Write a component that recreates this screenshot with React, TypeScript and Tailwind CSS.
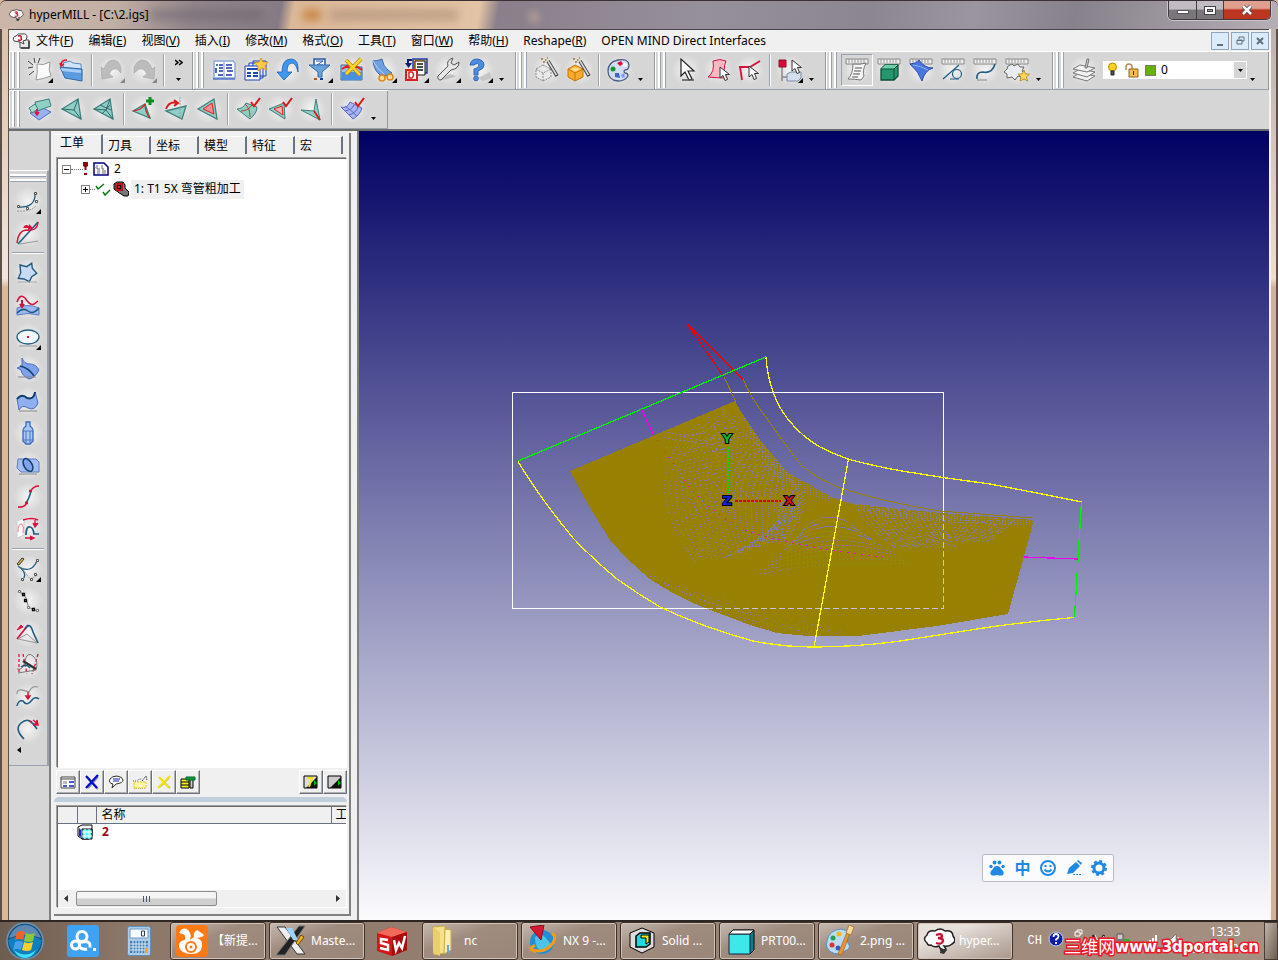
import React from 'react';

type Art = Record<string, React.ReactNode>;

const NAVY = '#1f5a80';
const RED = '#d8113c';

/** Shared piece: cursor arrow used by the selection tools. */
const cursor = (x: number, y: number) => (
  <path
    transform={`translate(${x} ${y})`}
    d="M0 0v11l3-2.500 2 5 2.500-1-2-5h4z"
    fill="#fff"
    stroke="#333"
    strokeWidth="1"
  />
);

const wand = (
  <>
    <path d="M13 3l9 15" stroke="#444" strokeWidth="3.500" />
    <path d="M13 3l8.500 14" stroke="#ddd" strokeWidth="1.500" />
    <path d="M6 1h2M10 2h1.500M8 4h2M12 0h1" stroke="#a0702c" strokeWidth="1.500" />
  </>
);

const ruler = (
  <>
    <path d="M1 1h22v5H1z" fill="#eee" stroke="#888" />
    <path d="M4 1v4M7 1v4M10 1v4M13 1v4M16 1v4M19 1v4" stroke="#999" />
  </>
);

const check = <path d="M15 5l3 4 6-8" fill="none" stroke="#e01818" strokeWidth="2" />;

const cube = (fill: string, line: string, dash?: string) => (
  <g fill={fill} stroke={line} strokeDasharray={dash}>
    <path d="M8 7l8 4v8l-8 4-7-4v-8z" />
    <path d="M1 11l7 4 8-4M8 15v8" fill="none" />
  </g>
);

const tri = (
  <path d="M2 12L18 2l3 20z" fill="#8fcfc6" stroke="#3f7f7c" strokeWidth="1.300" />
);

const TOOL_ART: Art = {
  new: (
    <>
      <path d="M9 6q6 2 13-2-2 8 1 14-8 3-15 4 2-8 1-16z" fill="#fafafa" stroke="#999" />
      <path d="M0 3l5 4M6 0l1 5M12 0l-2 5M0 10l5-1M1 17l5-4" stroke="#444" strokeWidth="1" />
    </>
  ),
  open: (
    <>
      <path d="M3 5l7-2 3 2 8 1 1 12H4z" fill="#cfe3fa" stroke="#5c86b8" />
      <path d="M0 9l22 2v12L5 20z" fill="#5b9be0" stroke="#3268a5" />
      <path d="M1 10l20 2v3L2 13z" fill="#a9cdf5" />
      <path d="M1 7q0-5 6-5M0 5l1 3 3-2" fill="none" stroke="#e01030" strokeWidth="1.500" />
    </>
  ),
  undo: (
    <path d="M1 9l1 12 11-2-4-3q3-6 8-5l4 4q1-11-7-13-7 0-10 9z" fill="#bcbcbc" stroke="#a2a2a2" strokeWidth=".6" />
  ),
  redo: (
    <path d="M23 9l-1 12-11-2 4-3q-3-6-8-5l-5 4Q1 4 10 2q7 0 10 9z" fill="#bcbcbc" stroke="#a2a2a2" strokeWidth=".6" />
  ),
  split: (
    <>
      <path d="M2 3h19l2 2v15H2z" fill="#fff" stroke="#8ba9dc" strokeWidth="1.500" />
      <path d="M12 4v16" stroke="#7d9ed8" />
      <path d="M4 7h2m1 0h4M7 10h4M7 13h4M6 17h5M14 7h6M14 10h6M15 13h6M14 17h6M4 10v5" stroke="#1636ac" strokeWidth="1.500" />
      <path d="M1 21h22" stroke="#1d46c0" />
    </>
  ),
  joblist: (
    <>
      <path d="M9 3h13v15H9zM5 5h14v15H5z" fill="#dfe9ff" stroke="#1d3fae" />
      <path d="M1 8h15v14H1z" fill="#fff" stroke="#1d3fae" />
      <path d="M3 11h11M3 15h4M3 18h4M9 15h5M9 18h5" stroke="#1d46c0" strokeWidth="2" />
      <path d="M17 0l2 4 5 0-3 4 2 4-5-2-4 3 0-5-4-3 5-1z" fill="#ffc94a" stroke="#c98a10" strokeWidth=".7" />
    </>
  ),
  back: (
    <path d="M8 22l-7-8h5q0-13 9-13 8 0 7 13-2-9-6-9-5 0-5 9h5z" fill="#3f97ee" stroke="#1e5fb5" strokeWidth=".8" />
  ),
  filter: (
    <>
      <path d="M6 1h11v8H6z" fill="#fff" stroke="#2758a8" strokeWidth="1.500" />
      <path d="M8 3l7 0-6 4h6" fill="none" stroke="#2758a8" />
      <path d="M1 7h21l-8 7v5h-4v-5z" fill="#6aa3dc" stroke="#3468a6" />
      <path d="M6 21h3" stroke="#b05a10" strokeWidth="2" />
      <path d="M12 21h3" stroke="#1636ac" strokeWidth="2" />
    </>
  ),
  folderx: (
    <>
      <path d="M1 7h8l2 2h11v13H1z" fill="#9cc1ec" stroke="#3468a6" />
      <path d="M2 11l5-3 4 3 5-3 6 4" fill="none" stroke="#e02020" strokeWidth="2" />
      <path d="M2 14h20v8H2z" fill="#4a90de" />
      <path d="M6 2l14 15M21 1L6 16" stroke="#b58a00" strokeWidth="4" />
      <path d="M6 2l14 15M21 1L6 16" stroke="#ffd62e" strokeWidth="2.500" />
    </>
  ),
  simulate: (
    <>
      <path d="M1 3q4 0 9-2 1 7 6 11l4 3-9 4Q2 14 1 3z" fill="#6ea0e0" stroke="#3e6cb0" />
      <path d="M1 3q4 8 11 13" fill="none" stroke="#b9d4f5" />
      <g fill="#f9dca0" stroke="#d88a1a" strokeWidth="1.500">
        <circle cx="10" cy="20" r="3" />
        <circle cx="18" cy="19" r="3" />
      </g>
    </>
  ),
  docD: (
    <>
      <path d="M9 1h14v14H9z" fill="#ffae3c" stroke="#1d3fae" strokeWidth="1.500" />
      <path d="M11 3h10v14H11z" fill="#fff" stroke="#111" />
      <path d="M13 6h6M13 9h6M13 12h6" stroke="#111" strokeWidth="1.500" />
      <path d="M2 12h11v10H2z" fill="#fff" stroke="#d82020" strokeWidth="2" />
      <path d="M5 14h3q3 3 0 6H5z" fill="none" stroke="#d82020" strokeWidth="1.500" />
      <path d="M8 2H4v5" fill="none" stroke="#111b70" strokeWidth="2" />
      <path d="M1 5h7l-3.500 5z" fill="#111b70" />
    </>
  ),
  wrench: (
    <>
      <path d="M2 22q10 0 18-4l-6-2z" fill="#999" opacity=".5" />
      <path d="M2 18l10-10q-2-6 5-8l-2 5 3 2 5-3q0 7-8 8L5 22q-4 0-3-4z" fill="#e6e6e6" stroke="#555" />
    </>
  ),
  help: (
    <>
      <path d="M10 20l12-6 1 6-8 3z" fill="#aaa" opacity=".5" />
      <path d="M2 7q1-6 7-6 7 1 7 6 0 4-6 6v4H6v-6q5-1 5-4-1-3-5 0z" fill="#4d8de0" stroke="#2c66b8" />
      <circle cx="8" cy="20.500" r="2.300" fill="#4d8de0" stroke="#2c66b8" />
    </>
  ),
  cubeGrey: (
    <>
      {cube('#e9e9e9', '#888', '2 1')}
      {wand}
    </>
  ),
  cubeGold: (
    <>
      {cube('#f9a92c', '#c37708')}
      <path d="M3 11l5-2 6 2-6 3z" fill="#ffd780" />
      {wand}
    </>
  ),
  palette: (
    <>
      <path d="M11 2q10-2 11 5 0 5-4 5-2 1 0 3 3 0 3 3-3 5-10 5Q1 22 1 13 1 4 11 2z" fill="#d4dded" stroke="#4a5d86" strokeWidth="1.300" />
      <path d="M10 5l4-2 2 3-3 2z" fill="#d8113c" />
      <circle cx="6" cy="11" r="2.500" fill="#18932d" />
      <path d="M8 15l4 0 1 5-5-1z" fill="#3d64cf" />
      <circle cx="18" cy="7" r="2" fill="#fff" />
      <path d="M14 17l3-2 1 4-3 1z" fill="#7e9be8" />
    </>
  ),
  select: (
    <>
      <path d="M7 1v17l4-4 4 8 3-1-4-8h6z" fill="#fff" stroke="#222" strokeWidth="1.200" />
      <path d="M8 22h12" stroke="#555" strokeWidth="1.500" />
    </>
  ),
  selFace: (
    <>
      <path d="M7 3q7-3 13 0-4 9 1 17-9 0-19-1 7-5 5-16z" fill="#ffb9c4" stroke={RED} />
      {cursor(14, 9)}
    </>
  ),
  selCurve: (
    <>
      <path d="M1 9l11 0 10-6M2 9l2 13" fill="none" stroke={RED} strokeWidth="1.800" />
      {cursor(11, 8)}
    </>
  ),
  selTree: (
    <>
      <path d="M4 9v14M4 19h8" stroke="#888" strokeWidth="1.500" />
      <path d="M1 2h7v7H1z" fill="#d80c3b" stroke="#8d0f2b" />
      <path d="M9 16l4-2h10v6l-3 3H9z" fill="#d5deec" stroke="#7d8aa0" />
      {cursor(14, 2)}
    </>
  ),
  script: (
    <>
      {ruler}
      <path d="M8 6q7 1 13-1-4 8-2 13l-3 4q-7-1-13-1 5-5 5-15z" fill="#f6f6f6" stroke="#777" />
      <path d="M10 10h7M9 13h7M8 16h7M7 19h6" stroke="#555" />
    </>
  ),
  solid: (
    <>
      {ruler}
      <path d="M4 11l4-4h13v11l-4 4H4z" fill="#27966f" stroke="#0b4e38" strokeWidth="1.300" />
      <path d="M4 11l4-4h13l-4 4z" fill="#6cd0a8" />
      <path d="M4 11h13v11M17 11l4-4" fill="none" stroke="#0b4e38" />
    </>
  ),
  surface: (
    <>
      {ruler}
      <path d="M1 6q6 0 9-4 5 8 14 8-8 2-11 13Q10 14 1 6z" fill="#4a74e0" stroke="#2a4cae" />
      <path d="M4 7q8 1 15 5" fill="none" stroke="#8fb0ff" />
    </>
  ),
  lineCircle: (
    <>
      {ruler}
      <path d="M2 21L18 7M9 21h9" stroke={NAVY} strokeWidth="1.200" />
      <circle cx="16" cy="16" r="4.500" fill="none" stroke={NAVY} strokeWidth="1.200" />
    </>
  ),
  curve: (
    <>
      {ruler}
      <path d="M4 21q-1-7 6-7 9 2 12-8" fill="none" stroke={NAVY} strokeWidth="1.600" />
      <path d="M4 22h10" stroke="#888" />
    </>
  ),
  puzzle: (
    <>
      {ruler}
      <path d="M3 8l4-2 2 2 4-2 2 3 4 0-2 4 3 3-4 3-3-1-3 4-3-3-5 1 0-4-3-2 3-3z" fill="#e9edf2" stroke="#666" />
      <path d="M19 12l1.500 4 4 0-3 3 1 4-3.500-2-4 2 1-4-3-3 4 0z" fill="#ffd75a" stroke="#b08010" strokeWidth=".8" />
    </>
  ),
  layers: (
    <g fill="#f2f2f2" stroke="#777">
      <path d="M1 19l7-4 15 3-8 5z" />
      <path d="M1 15l7-4 15 3-8 5z" />
      <path d="M1 11l7-4 15 3-8 4z" />
      <path d="M13 10l2-9 2 0-2 9z" fill="#ccc" />
    </g>
  ),
  planes: (
    <>
      <path d="M2 16l13-5 8 4-12 8z" fill="#9bb2ef" stroke="#4e6cc0" />
      <path d="M7 5l14-3 2 7-14 5z" fill="#8fcfc6" stroke="#3f7f7c" />
      <path d="M1 11l6-4 3 5-6 4z" fill="#a6d8d0" stroke="#3f7f7c" />
      <path d="M9 12v5M7 15l2 3 2-3" stroke={RED} strokeWidth="1.500" fill="none" />
    </>
  ),
  triA: (
    <>
      {tri}
      <path d="M2 12l12 1 4-11M14 13l7 9" fill="none" stroke="#2f6a68" />
    </>
  ),
  triB: (
    <>
      {tri}
      <path d="M2 12l12 1 4-11M14 13l7 9M8 8l11 5M10 17l8-9" fill="none" stroke="#2f6a68" />
    </>
  ),
  triPlus: (
    <>
      <path d="M1 14l12-7 5 14z" fill="#8fcfc6" stroke="#3f7f7c" strokeWidth="1.300" />
      <path d="M1 14q9-1 12-7 0 8 5 14" fill="none" stroke="#d82020" strokeWidth="1.200" />
      <path d="M18 0v8M14 4h8" stroke="#0a8f1f" strokeWidth="3" />
    </>
  ),
  triRotate: (
    <>
      <path d="M2 14l20-5-4 13z" fill="#8fcfc6" stroke="#3f7f7c" strokeWidth="1.300" />
      <path d="M16 0v22" stroke="#999" strokeDasharray="2 1" />
      <path d="M2 12q3-8 11-6M10 3l4 3-4 3" fill="none" stroke="#e01818" strokeWidth="2" />
    </>
  ),
  triRed: (
    <>
      {tri}
      <path d="M7 12l9-6 2 11z" fill="#f08b93" stroke="#d82020" />
    </>
  ),
  surfCheck: (
    <>
      <path d="M1 12q6 0 9-6l11 4q0 6-7 12z" fill="#8fcfc6" stroke="#3f7f7c" />
      <path d="M5 14q7 0 11-6M9 7q5 4 5 13" fill="none" stroke="#b04030" />
      {check}
    </>
  ),
  triCheck: (
    <>
      <path d="M1 12l15-6 1 16z" fill="#8fcfc6" stroke="#3f7f7c" />
      <path d="M6 12l8-3 1 9z" fill="#f3b4b8" stroke="#d82020" />
      {check}
    </>
  ),
  triEdge: (
    <>
      <path d="M1 13l13 1 2-12 4 21z" fill="#8fcfc6" stroke="#3f7f7c" />
      <path d="M14 14l6 9" stroke="#d82020" strokeWidth="1.800" />
    </>
  ),
  meshCheck: (
    <>
      <path d="M1 10q6 2 9-5l12 6q-2 7-9 11z" fill="#a9b4f0" stroke="#5968c0" />
      <path d="M5 14q7-1 9-6M9 18q7-2 9-8M5 9q7 5 12 10" fill="none" stroke="#5968c0" />
      {check}
    </>
  ),
};

const SIDE_ART: Art = {
  arcPts: (
    <>
      <path d="M2 18q18 1 17-14" fill="none" stroke={NAVY} strokeWidth="1.200" />
      <path d="M1 22q14 1 19-5" fill="none" stroke="#999" strokeDasharray="2 1" />
      <path d="M1.500 16.500h2v2h-2zM10.500 18.500h2v2h-2zM19.500 11.500h2v2h-2zM18.500 3.500h2v2h-2z" fill="#fff" stroke="#555" />
    </>
  ),
  tangent: (
    <>
      <path d="M2 23L22 1" stroke={NAVY} strokeWidth="1.500" />
      <path d="M1 22Q2 10 10 9q11 2 12-8" fill="none" stroke={RED} strokeWidth="1.500" />
      <path d="M7 7q2-5 6-2l0-2 4 4-5 2 0-2z" fill={RED} />
      <path d="M4 23l18-3" stroke="#999" />
    </>
  ),
  star: (
    <>
      <path
        d="M4 4L10.700 5.700L15.700 2.300L16.300 7.300L20.700 12.300L15.700 15.700L13.300 20.700L8 18L2.300 17.300L4.700 11.700Z"
        fill="#c9daf5"
        stroke={NAVY}
        strokeWidth="1.400"
      />
      <path d="M2 21h19" stroke="#aaa" />
    </>
  ),
  project: (
    <>
      <path d="M1 15q11-5 22 0v7q-11-3-22 0z" fill="#9bb8ef" stroke="#5a7cc8" />
      <path d="M1 20q6-6 11-2t11-3" fill="none" stroke={NAVY} strokeWidth="1.500" />
      <path d="M1 9q3-9 8-4 5 8 9 6l4-3" fill="none" stroke={RED} strokeWidth="1.500" />
      <path d="M6 7v6M4 11l2 3 2-3" stroke={RED} strokeWidth="2" />
    </>
  ),
  ellipse: (
    <>
      <ellipse cx="12" cy="12" rx="11" ry="7" fill="#f4f8fb" stroke={NAVY} strokeWidth="1.300" />
      <path d="M11 11h2v2h-2z" fill={RED} />
      <path d="M3 21h18" stroke="#999" />
    </>
  ),
  fill: (
    <>
      <path d="M6 1q2 6 8 6 6 0 9 6-4 8-10 9-7-3-8-9L1 11l5-2z" fill="#7fa2ea" stroke="#4a6cc4" />
      <path d="M4 9q9 2 14 10" fill="none" stroke="#123e6a" strokeWidth="1.500" />
      <path d="M2 20h18" stroke="#888" />
    </>
  ),
  sweep: (
    <>
      <path d="M1 10q5-6 10-1 7 2 8-6l3 11q-3 8-10 5-6-4-9 2z" fill="#8fb0ef" stroke="#4a6cc4" />
      <path d="M1 10q5-6 10-1 7 2 8-6" fill="none" stroke="#123e6a" strokeWidth="2" />
      <path d="M3 22h18" stroke="#888" />
    </>
  ),
  bottle: (
    <>
      <path d="M10 1h4v4q3 2 3 5v10l-3 3h-4l-3-3V10q0-3 3-5z" fill="#a9c6f5" stroke="#3b68b8" strokeWidth="1.300" />
      <path d="M7 10h10M7 19h10M10 10v12M14 10v12" stroke="#3b68b8" strokeWidth=".8" />
    </>
  ),
  band: (
    <>
      <path d="M2 6h18l3 3v10H5l-4-4z" fill="#a5bdf0" stroke="#5a7cc8" />
      <ellipse cx="12" cy="12" rx="4" ry="7" transform="rotate(-30 12 12)" fill="#7fa2ea" stroke="#123e6a" strokeWidth="1.500" />
      <path d="M3 21h18" stroke="#888" />
    </>
  ),
  blend: (
    <>
      <path d="M2 22q7 1 9-5M15 6q2-5 8-5" fill="none" stroke={RED} strokeWidth="1.600" />
      <path d="M10 18q3-4 5-12" fill="none" stroke={NAVY} strokeWidth="1.500" />
      <path d="M9 18h3M13 6h3" stroke={RED} strokeWidth="2.500" />
    </>
  ),
  wrap: (
    <>
      <path d="M1 4l7-3v17l-7 3z" fill="#fff" stroke="#ccc" />
      <path d="M2 15q0-8 3-8t2 9" fill="none" stroke="#f07a92" />
      <path d="M7 3q9-3 15 0" fill="none" stroke={RED} strokeWidth="1.500" />
      <path d="M10 18q0-9 4-8 3 0 4 7l5 0" fill="none" stroke={NAVY} strokeWidth="1.700" />
      <path d="M19 3v5M17 6l2 4 3-4M9 21h8M14 19l4 2-4 2" stroke={RED} strokeWidth="1.300" fill={RED} />
    </>
  ),
  sketch: (
    <>
      <path d="M2 9q9 6 6 12M3 10q12 7 18-6" fill="none" stroke={NAVY} strokeWidth="1.300" />
      <path d="M5 10l9 12 8-4" fill="none" stroke="#999" strokeDasharray="2 1" />
      <path d="M1 7l5-6 2 1-5 6z" fill="#e2b53a" stroke="#333" />
      <path d="M20.500 2.500h2v2h-2zM18.500 16.500h2v2h-2zM5.500 21.500h2v2h-2zM14.500 21.500h2v2h-2z" fill="#fff" stroke="#555" />
    </>
  ),
  points: (
    <>
      <path d="M3 3q7 2 8 10t12 9" fill="none" stroke="#777" />
      <path d="M2.500 1.500h2v2h-2zM20.500 20.500h2v2h-2zM11.500 17.500h2v2h-2z" fill="#fff" stroke="#777" />
      <path d="M6.500 4.500h2v2h-2zM8.500 10.500h2v2h-2zM16.500 19.500h2v2h-2z" fill="#fff" stroke="#000" strokeWidth="1.300" />
    </>
  ),
  extend: (
    <>
      <path d="M1 18L12 4" stroke={RED} strokeWidth="1.700" />
      <path d="M9 8q5-8 8 3l5 11" fill="none" stroke={NAVY} strokeWidth="1.600" />
      <path d="M2 18l9-5 10 9z" fill="none" stroke="#999" />
      <path d="M1 9l4-5 2 2z" fill={RED} stroke={RED} />
    </>
  ),
  trim: (
    <>
      <path d="M3 1v20M7 1l4 20M22 1q-3 12-6 20" stroke={RED} strokeWidth="1.300" strokeDasharray="3 2" fill="none" />
      <path d="M1 16q6 2 8-8t8-5 3 14l-18 3" fill="none" stroke="#777" />
      <path d="M7 8l13 8" stroke="#333" strokeWidth="2.500" />
      <path d="M5 14q5-4 9 1" fill="none" stroke={NAVY} strokeWidth="1.500" />
    </>
  ),
  offset: (
    <>
      <path d="M1 9q0-5 5-4t7 2q3-7 9-5" fill="none" stroke="#999" strokeWidth="1.300" />
      <path d="M1 21q1-6 6-5 4 6 9-1 3-4 7-1" fill="none" stroke={NAVY} strokeWidth="1.500" />
      <path d="M12 7v5M10 11l2 3 2-3z" fill={RED} stroke={RED} strokeWidth="1.500" />
    </>
  ),
  arc: (
    <>
      <path d="M8 22Q-2 12 5 6q6-5 10-1 3 2 6 7" fill="none" stroke={NAVY} strokeWidth="1.600" />
      <path d="M13 4l3 1M17 3l5 4M21 3l1 5-5 0" stroke={RED} strokeWidth="1.500" fill={RED} />
    </>
  ),
};

interface ToolProps {
  art: React.ReactNode;
  label: string;
  corner?: 'black' | 'grey';
  pressed?: boolean;
}

/** 32px icon button with the soft highlight that lies behind every tool. */
function Tool({ art, label, corner, pressed }: ToolProps) {
  return (
    <button
      aria-label={label}
      className={`relative flex size-8 shrink-0 items-center justify-center ${
        pressed ? 'border border-t-gray-400 border-l-gray-400 border-r-white border-b-white' : ''
      } bg-[radial-gradient(circle,#f4f4f4_0%,#d6d6d6_65%)]`}
    >
      <svg viewBox="0 0 24 24" className="size-6 overflow-visible" fill="none">
        {art}
        {corner && <path d="M25 20v5h-5z" fill={corner === 'black' ? '#000' : '#888'} />}
      </svg>
    </button>
  );
}

function Grip() {
  return (
    <div className="ml-[3px] mr-1 flex h-9 w-2 shrink-0 gap-[2px]">
      <div className="w-[3px] border-l-2 border-r border-white border-r-gray-400" />
      <div className="w-[3px] border-l-2 border-r border-white border-r-gray-400" />
    </div>
  );
}

const Sep = () => (
  <div className="flex w-2 shrink-0 justify-center">
    <div className="h-8 w-[2px] border-l border-r border-l-gray-400 border-r-white" />
  </div>
);

function More({ chevron }: { chevron?: boolean }) {
  return (
    <button
      aria-label="More"
      className={`flex h-9 shrink-0 flex-col justify-end gap-3 pb-[7px] ${
        chevron ? 'w-[25px] items-center pr-1' : 'w-5 items-start pl-[3px]'
      }`}
    >
      {chevron && (
        <svg viewBox="0 0 8 7" className="h-[7px] w-2">
          <path d="M0 1l3 2.500L0 6M4 1l3 2.500L4 6" fill="none" stroke="#000" strokeWidth="1.500" />
        </svg>
      )}
      <svg viewBox="0 0 5 3" className="h-[3px] w-[5px]">
        <path d="M0 0h5L2.500 3z" />
      </svg>
    </button>
  );
}

function Toolbar({ children, grow }: { children: React.ReactNode; grow?: boolean }) {
  return (
    <div
      className={`flex h-[39px] items-center border-b border-gray-400 shadow-[inset_1px_1px_0_#fff,inset_-1px_0_0_#999] ${
        grow ? 'flex-1' : 'shrink-0'
      }`}
    >
      <Grip />
      {children}
    </div>
  );
}

const MENUS: [string, string][] = [
  ['文件', 'F'],
  ['编辑', 'E'],
  ['视图', 'V'],
  ['插入', 'I'],
  ['修改', 'M'],
  ['格式', 'O'],
  ['工具', 'T'],
  ['窗口', 'W'],
  ['帮助', 'H'],
  ['Reshape', 'R'],
];

/** The red "3" inside a thought bubble. */
function AppLogo({ className }: { className: string }) {
  return (
    <svg viewBox="0 0 32 26" className={className}>
      <path
        d="M4 15Q-1 11 4 7q1-5 8-4 5-4 10 0 8-1 8 5 4 5-1 8-3 3-8 2l2 3-4 3-3-6q-5 2-8-1-3 1-4-2z"
        fill="#fff"
        stroke="#222"
        strokeWidth="1.500"
      />
      <path d="M13 7q6-2 6 1 0 2-4 2 5 0 5 3-1 4-7 2" fill="none" stroke="#c8102e" strokeWidth="2.300" />
      <path d="M18 20l6 2-3 4-4-1z" fill="#333" />
    </svg>
  );
}

function TitleBar() {
  return (
    <header className="relative flex h-[29px] shrink-0 items-center overflow-hidden rounded-t-md border-t border-[#3a3036] bg-[linear-gradient(100deg,#cbb6a9_0%,#c3b0a5_9%,#93878c_15%,#857b84_22%,#dcb899_23%,#e3c3a5_37.500%,#8a7f8a_39%,#96909a_55%,#8c8690_68%,#9b95a0_76%,#87818b_84%,#b5aeb5_100%)]">
      <div className="absolute top-2 left-[302px] h-3 w-5 rounded-full bg-[#c98a4a] blur-xs" />
      <div className="absolute top-2 left-[330px] h-3 w-32 bg-[#a28670]/50 blur-xs" />
      <div className="absolute top-3 left-[530px] size-2 bg-[#c9ae9c] blur-xs" />
      <div className="absolute top-2 left-[150px] h-3 w-28 bg-[#5f5a63]/40 blur-xs" />
      <AppLogo className="relative ml-2 h-3 w-4" />
      <h1 className="relative ml-[5px] text-xs text-black">hyperMILL - [C:\2.igs]</h1>
      <div className="absolute top-0 right-[7px] flex h-[19px] overflow-hidden rounded-b-[5px] border border-t-0 border-[#413c42] shadow-[0_0_0_1px_#c9c4c9]">
        <button aria-label="Minimize" className="flex w-7 items-center justify-center border-r border-[#413c42] bg-linear-to-b from-[#c2bcc2] from-45% to-[#7b757c] to-50%">
          <span className="mt-1 h-1 w-3 border border-[#555] bg-white" />
        </button>
        <button aria-label="Restore" className="flex w-[27px] items-center justify-center border-r border-[#413c42] bg-linear-to-b from-[#c2bcc2] from-45% to-[#7b757c] to-50%">
          <span className="h-[9px] w-3 border border-[#444] bg-white p-[2px]">
            <span className="block h-full border border-[#444] bg-gray-400" />
          </span>
        </button>
        <button aria-label="Close" className="flex w-[46px] items-center justify-center bg-linear-to-b from-[#e0a090] from-40% to-[#bb3520] to-50%">
          <svg viewBox="0 0 12 10" className="h-[10px] w-3">
            <path d="M2 1l8 8M10 1L2 9" stroke="#444" strokeWidth="4" />
            <path d="M2 1l8 8M10 1L2 9" stroke="#fff" strokeWidth="2.500" />
          </svg>
        </button>
      </div>
    </header>
  );
}

function MenuBar() {
  const mdi = 'flex h-[18px] w-[18px] items-center justify-center border border-[#8fa5bb] bg-[#dcebf9]';
  return (
    <nav className="flex h-[21px] shrink-0 items-center bg-[#f0f0f0] pl-[3px] text-xs text-black">
      <svg viewBox="0 0 18 18" className="mr-[6px] h-[18px] w-[18px]">
        <path d="M8 8h9v8H8z" fill="#e8e8e8" stroke="#555" />
        <path d="M9 16h8V9" stroke="#333" strokeWidth="1.500" fill="none" />
        <path d="M2 9Q0 5 4 4q2-3 6-2 5-1 5 3 0 4-4 4l1 3-4-2z" fill="#fff" stroke="#444" />
        <path d="M6 4q4-1 3 2 2 3-3 2" fill="none" stroke="#d0102e" strokeWidth="1.500" />
      </svg>
      <ul className="flex gap-[15px] whitespace-nowrap">
        {MENUS.map(([name, key]) => (
          <li key={key}>
            <button>
              {name}(<u>{key}</u>)
            </button>
          </li>
        ))}
        <li>
          <button>OPEN MIND Direct Interfaces</button>
        </li>
      </ul>
      <div className="ml-auto flex gap-[2px]">
        <button aria-label="Minimize document" className={mdi}>
          <span className="mt-2 h-[2px] w-[6px] bg-[#5d6f80]" />
        </button>
        <button aria-label="Restore document" className={mdi}>
          <svg viewBox="0 0 9 9" className="size-[9px]" fill="none" stroke="#5d6f80">
            <path d="M3 3V1h5v4H6M1 4h5v4H1zM1 4.500h5" />
          </svg>
        </button>
        <button aria-label="Close document" className={mdi}>
          <svg viewBox="0 0 8 8" className="size-2" stroke="#5d6f80" strokeWidth="2">
            <path d="M1 1l6 6M7 1L1 7" />
          </svg>
        </button>
      </div>
    </nav>
  );
}

function LayerSelect() {
  return (
    <div className="relative ml-[3px] h-[18px] w-36">
      <select
        aria-label="Layer"
        defaultValue="0"
        className="block h-[18px] w-full appearance-none bg-white pl-[58px] text-xs leading-[18px] text-black"
      >
        <option>0</option>
      </select>
      <svg viewBox="0 0 52 18" className="pointer-events-none absolute top-0 left-1 h-[18px] w-[52px]">
        <circle cx="5.500" cy="6" r="4" fill="#ffd21e" stroke="#b58700" />
        <path d="M4 10h3v4H4z" fill="#555" stroke="#222" />
        <path d="M19 9V6q0-3 3-3t3 3v2" fill="none" stroke="#b58a50" strokeWidth="1.500" />
        <path d="M22 8h9v8h-9z" fill="#f4bd4c" stroke="#8a6420" />
        <path d="M26 10h1v4h-1z" fill="#333" />
        <path d="M38.500 4.500h10v10h-10z" fill="#66b200" stroke="#777" />
      </svg>
      <span className="pointer-events-none absolute top-px right-px flex h-4 w-3 items-center justify-center bg-[#d6d6d6]">
        <svg viewBox="0 0 5 3" className="h-[3px] w-[5px]">
          <path d="M0 0h5L2.500 3z" />
        </svg>
      </span>
    </div>
  );
}

function Toolbars() {
  return (
    <div className="shrink-0 border-b-2 border-[#6b6b6b] bg-[#d6d6d6]">
      <div className="flex">
        <Toolbar>
          <Tool label="New" art={TOOL_ART.new} corner="black" />
          <Tool label="Open" art={TOOL_ART.open} />
          <Sep />
          <Tool label="Undo" art={TOOL_ART.undo} corner="grey" />
          <Tool label="Redo" art={TOOL_ART.redo} corner="grey" />
          <Sep />
          <More chevron />
        </Toolbar>
        <Toolbar>
          <Tool label="Browser" art={TOOL_ART.split} />
          <Tool label="Job list" art={TOOL_ART.joblist} />
          <Tool label="Back" art={TOOL_ART.back} />
          <Tool label="Filter" art={TOOL_ART.filter} corner="black" />
          <Tool label="Delete folder" art={TOOL_ART.folderx} />
          <Tool label="Simulation" art={TOOL_ART.simulate} corner="black" />
          <Tool label="Documentation" art={TOOL_ART.docD} corner="black" />
          <Tool label="Settings" art={TOOL_ART.wrench} corner="black" />
          <Tool label="Help" art={TOOL_ART.help} corner="black" />
          <More />
        </Toolbar>
        <Toolbar>
          <Tool label="Wire model" art={TOOL_ART.cubeGrey} />
          <Tool label="Shaded model" art={TOOL_ART.cubeGold} />
          <Sep />
          <Tool label="Colours" art={TOOL_ART.palette} />
          <More />
        </Toolbar>
        <Toolbar>
          <Tool label="Select" art={TOOL_ART.select} />
          <Tool label="Select face" art={TOOL_ART.selFace} />
          <Tool label="Select curve" art={TOOL_ART.selCurve} />
          <Sep />
          <Tool label="Select group" art={TOOL_ART.selTree} corner="black" />
          <More />
        </Toolbar>
        <Toolbar>
          <Tool label="Script" art={TOOL_ART.script} pressed />
          <Tool label="Solids" art={TOOL_ART.solid} />
          <Tool label="Surfaces" art={TOOL_ART.surface} />
          <Tool label="Lines" art={TOOL_ART.lineCircle} />
          <Tool label="Curves" art={TOOL_ART.curve} />
          <Tool label="Features" art={TOOL_ART.puzzle} />
          <More />
        </Toolbar>
        <Toolbar grow>
          <Tool label="Layers" art={TOOL_ART.layers} />
          <LayerSelect />
          <More />
        </Toolbar>
      </div>
      <div className="flex">
        <Toolbar>
          <Tool label="Planes" art={TOOL_ART.planes} />
          <Tool label="Triangulate" art={TOOL_ART.triA} />
          <Tool label="Refine" art={TOOL_ART.triB} />
          <Sep />
          <Tool label="Add triangle" art={TOOL_ART.triPlus} />
          <Tool label="Rotate triangle" art={TOOL_ART.triRotate} />
          <Tool label="Remove triangle" art={TOOL_ART.triRed} />
          <Sep />
          <Tool label="Check surface" art={TOOL_ART.surfCheck} />
          <Tool label="Check triangle" art={TOOL_ART.triCheck} />
          <Tool label="Edge" art={TOOL_ART.triEdge} />
          <Sep />
          <Tool label="Check mesh" art={TOOL_ART.meshCheck} />
          <More />
        </Toolbar>
      </div>
    </div>
  );
}

function SideBar() {
  const rule = (
    <div className="flex h-2 items-center">
      <div className="h-[2px] w-8 border-t border-b border-t-gray-400 border-b-white" />
    </div>
  );
  return (
    <aside className="w-10 shrink-0 bg-[#d6d6d6] pt-[39px]">
      <div className="flex flex-col items-center border-t border-b border-t-white border-b-gray-400 border-r-2 border-r-gray-400 pb-[10px]">
        <div className="flex h-[14px] w-9 flex-col justify-center gap-[2px]">
          <div className="h-[3px] border-t-2 border-b border-white border-b-gray-400" />
          <div className="h-[3px] border-t-2 border-b border-white border-b-gray-400" />
        </div>
        <Tool label="Arc through points" art={SIDE_ART.arcPts} corner="black" />
        <Tool label="Tangent" art={SIDE_ART.tangent} />
        {rule}
        <Tool label="Contour" art={SIDE_ART.star} />
        <Tool label="Project" art={SIDE_ART.project} />
        <Tool label="Ellipse" art={SIDE_ART.ellipse} corner="black" />
        <Tool label="Fill" art={SIDE_ART.fill} />
        <Tool label="Sweep" art={SIDE_ART.sweep} />
        <Tool label="Revolve" art={SIDE_ART.bottle} />
        <Tool label="Section" art={SIDE_ART.band} />
        <Tool label="Blend" art={SIDE_ART.blend} />
        <Tool label="Wrap" art={SIDE_ART.wrap} />
        {rule}
        <Tool label="Sketch" art={SIDE_ART.sketch} corner="black" />
        <Tool label="Points" art={SIDE_ART.points} />
        <Tool label="Extend" art={SIDE_ART.extend} />
        <Tool label="Trim" art={SIDE_ART.trim} />
        <Tool label="Offset" art={SIDE_ART.offset} />
        <Tool label="Arc" art={SIDE_ART.arc} />
        <svg viewBox="0 0 32 10" className="h-[10px] w-8">
          <path d="M9 2v6L5 5z" />
        </svg>
      </div>
    </aside>
  );
}

const TABS = ['刀具', '坐标', '模型', '特征', '宏'];

function Expander({ open }: { open?: boolean }) {
  return (
    <button aria-label={open ? 'Collapse' : 'Expand'} className="size-[9px] shrink-0 bg-white">
      <svg viewBox="0 0 9 9" className="size-[9px]" shapeRendering="crispEdges" fill="none">
        <path d="M.5.5h8v8h-8z" stroke="#808080" />
        <path d={open ? 'M2 4.500h5' : 'M2 4.500h5M4.500 2v5'} stroke="#000" />
      </svg>
    </button>
  );
}

const SMALL_ART: Art = {
  props: (
    <>
      <path d="M1 3h14v11H1zM1 5h14" fill="#fff" stroke="#444" />
      <path d="M3 7h4v3H3z" fill="#bbb" />
      <path d="M9 8h5M3 12h4M9 12h5" stroke="#1020b0" strokeWidth="1.500" />
    </>
  ),
  del: (
    <>
      <path d="M3 3l11 12M14 3L4 14" stroke="#999" strokeWidth="2" />
      <path d="M2 2l11 12M14 1L2 14" stroke="#0010d0" strokeWidth="2.300" />
    </>
  ),
  note: (
    <>
      <path d="M2 5q2-3 7-3 6 1 6 4t-7 4l-4 4 1-4q-5-1-3-5z" fill="#fff" stroke="#333" />
      <path d="M5 5h7M5 7h6" stroke="#1020b0" />
    </>
  ),
  folder: (
    <>
      <path d="M1 7h5l1-2h3M2 14h12" stroke="#666" strokeDasharray="1 1" />
      <path d="M2 8h12v6H2z" fill="#fff9b0" stroke="#e0c800" strokeDasharray="2 1" />
      <path d="M10 7l4-5 1 4" fill="none" stroke="#444" strokeDasharray="2 1" />
    </>
  ),
  yx: (
    <>
      <path d="M4 4l10 10M13 4L4 13" stroke="#aaa" strokeWidth="1.500" />
      <path d="M3 3l10 11M14 2L2 14" stroke="#f5e400" strokeWidth="2" />
    </>
  ),
  depot: (
    <>
      <path d="M1 5h8v9H1z" fill="#f5ef30" stroke="#000" />
      <path d="M1 8h8M1 11h8" stroke="#000" />
      <path d="M10 6v8h3V6" fill="#ccc" stroke="#000" />
      <path d="M6 3h9v3H6z" fill="#10a030" stroke="#063" />
    </>
  ),
  viewA: (
    <>
      <path d="M1 2h13v12H1z" fill="#ddd" stroke="#000" />
      <path d="M14 3v11H3z" fill="#111" />
      <path d="M4 4h5l-3 9" fill="none" stroke="#f5e400" strokeWidth="2" />
      <path d="M11 6v6l3-3z" fill="#0b0" />
    </>
  ),
  viewB: (
    <>
      <path d="M1 2h13v12H1z" fill="#ccc" stroke="#000" />
      <path d="M14 3v11H3z" fill="#111" />
      <path d="M11 6v6l3-3z" fill="#0b0" />
    </>
  ),
};

function SmallButton({ art, label }: { art: React.ReactNode; label: string }) {
  return (
    <button
      aria-label={label}
      className="flex size-6 items-center justify-center border border-white border-r-gray-500 border-b-gray-500 bg-[#f0f0f0] shadow-[inset_-1px_-1px_0_#b0b0b0]"
    >
      <svg viewBox="0 0 16 16" className="size-4" fill="none">
        {art}
      </svg>
    </button>
  );
}

function JobPanel() {
  const sunken = 'border border-[#696969] border-r-white border-b-white bg-white shadow-[-1px_-1px_0_#a0a0a0]';
  return (
    <section className="flex w-[310px] shrink-0 flex-col border-r-2 border-l-2 border-r-[#808080] border-l-[#808080] bg-[#f0f0f0] pt-[2px] pr-[6px] pb-1 pl-[3px] text-black">
      <div className="flex min-h-0 flex-1 flex-col border-r-2 border-b-2 border-[#808080] pr-[2px] pb-[6px]">
        <div role="tablist" className="flex h-[21px] items-end text-xs">
          <button role="tab" aria-selected="true" className="h-5 w-[49px] border-t border-r-2 border-t-white border-r-gray-500 pb-1 pl-[6px] text-left leading-4">
            工单
          </button>
          {TABS.map((tab) => (
            <button key={tab} role="tab" aria-selected="false" className="h-[18px] w-12 border-t border-r-2 border-t-white border-r-gray-500 pl-[5px] text-left leading-4">
              {tab}
            </button>
          ))}
        </div>

        <div className={`mt-1 ml-[3px] min-h-0 flex-1 text-xs ${sunken}`}>
          <div className="flex h-5 items-center pl-1">
            <Expander open />
            <span className="w-3 border-t border-dotted border-gray-500" />
            <svg viewBox="0 0 5 16" className="h-4 w-[5px]">
              <path d="M0 1h5v4L3.500 6v3h-2V6L0 5zM1 12h3v2H1z" fill="#900008" />
            </svg>
            <svg viewBox="0 0 16 14" className="ml-[5px] h-[14px] w-4">
              <path d="M1 1h10l4 4v8H1z" fill="#fff" stroke="#000080" strokeWidth="1.500" />
              <path d="M4 3v4h3M9 3v4h2M4 9h3M4 11h3M9 9h4M9 11h4M2 5v1" stroke="#667" fill="none" />
            </svg>
            <span className="ml-[5px]">2</span>
          </div>
          <div className="flex h-5 items-center pl-[23px]">
            <Expander />
            <span className="w-[5px] border-t border-dotted border-gray-500" />
            <svg viewBox="0 0 16 14" className="h-[14px] w-4" fill="none" stroke="#0a7a14" strokeWidth="1.500">
              <path d="M1 4l2 3 6-5M8 10l2 3 5-5" />
            </svg>
            <svg viewBox="0 0 16 16" className="ml-[2px] size-4">
              <path d="M4 1h6l2 3v3l4 4-1 4h-4L5 11 1 8V3z" fill="#777" stroke="#000" />
              <path d="M2 2h8v8H2z" fill="#111" />
              <path d="M3 3h6v6H3z" fill="none" stroke="#f01818" strokeWidth="1.500" />
              <path d="M5 5h2v2H5z" fill="#f01818" />
            </svg>
            <span className="ml-[2px] h-[19px] bg-[#f0f0f0] px-[3px] leading-[18px]">1: T1 5X 弯管粗加工</span>
          </div>
        </div>

        <div className="mt-[2px] flex shrink-0 pl-[2px]">
          <SmallButton label="Properties" art={SMALL_ART.props} />
          <SmallButton label="Delete" art={SMALL_ART.del} />
          <SmallButton label="Comment" art={SMALL_ART.note} />
          <SmallButton label="Folder" art={SMALL_ART.folder} />
          <SmallButton label="Clear" art={SMALL_ART.yx} />
          <SmallButton label="Tool depot" art={SMALL_ART.depot} />
          <div className="ml-auto flex">
            <SmallButton label="View jobs" art={SMALL_ART.viewA} />
            <SmallButton label="View all" art={SMALL_ART.viewB} />
          </div>
        </div>

        <div className="mt-[3px] h-[5px] shrink-0 rounded-t-full bg-[#c0cfdc]" />

        <div className={`mt-1 ml-[3px] flex h-[102px] shrink-0 flex-col overflow-hidden ${sunken}`}>
          <table className="w-full table-fixed text-xs">
            <thead>
              <tr className="h-4 border-b border-gray-500 bg-[#f0f0f0] leading-[14px]">
                <th className="w-[19px] border-r border-gray-500" />
                <th className="w-[19px] border-r border-gray-500" />
                <th className="border-r border-gray-500 pl-[5px] text-left font-normal">名称</th>
                <th className="w-[15px] overflow-hidden pl-1 text-left font-normal">工</th>
              </tr>
            </thead>
            <tbody>
              <tr className="h-[17px]">
                <td />
                <td>
                  <svg viewBox="0 0 16 16" className="size-4 overflow-visible">
                    <path d="M1 3l4-2h10v11l-3 3H5l-4-3z" fill="#fff" stroke="#000" />
                    <path d="M5 5h10v10H5z" fill="#5ff" stroke="#000" />
                    <path d="M8 5v10M12 5v10M5 8h10M5 12h10" stroke="#fff" />
                    <path d="M2 4l2 2v7l-2-1z" fill="#22c" />
                  </svg>
                </td>
                <td className="pl-[6px] font-bold text-[#a00008]">2</td>
                <td />
              </tr>
            </tbody>
          </table>
          <div className="mt-auto flex h-[17px] items-center bg-[#f0f0f0] px-[6px]">
            <svg viewBox="0 0 4 7" className="h-[7px] w-1">
              <path d="M4 0v7L0 3.500z" fill="#333" />
            </svg>
            <div className="ml-2 flex h-[15px] w-[141px] items-center justify-center gap-[2px] rounded-xs border border-[#8d8d8d] bg-linear-to-b from-[#f4f4f4] from-45% to-[#cfcfcf] to-55%">
              <span className="h-[6px] w-px bg-gray-600" />
              <span className="h-[6px] w-px bg-gray-600" />
              <span className="h-[6px] w-px bg-gray-600" />
            </div>
            <svg viewBox="0 0 4 7" className="ml-auto h-[7px] w-1">
              <path d="M0 0v7l4-3.500z" fill="#333" />
            </svg>
          </div>
        </div>
      </div>
    </section>
  );
}

const TOOLPATH =
  'M735 401L570 471Q588 506 610 540Q628 561 650 579Q672 594 700 606L750 625L777 633L813 636.500L858 636L937 626L1008 614L1034 520L940 513L890 508L848 503L833 498L810 485L788 473L760 440L740 410Z';

/** Gaps between the passes: arcs on the left of the bend, arches below it, slants on the right. */
const arcs = Array.from({ length: 24 }, (_, i) => i);
const arches = Array.from({ length: 11 }, (_, i) => i);
const slants = Array.from({ length: 32 }, (_, i) => 856 + i * 5);
const rim = Array.from({ length: 20 }, (_, i) => i);

function Viewport() {
  return (
    <main className="relative min-w-0 flex-1 bg-linear-to-b/srgb from-[#000063] to-[#fbfbfd]">
      <svg viewBox="359 131 910 789" className="absolute inset-0 h-full w-full" fill="none" shapeRendering="crispEdges">
        <defs>
          <clipPath id="path-area">
            <path d={TOOLPATH} />
          </clipPath>
          <pattern id="mesh" width="3" height="2" patternUnits="userSpaceOnUse">
            <path d="M0 0h1v1H0z" fill="#7f7cb4" />
          </pattern>
        </defs>

        <path d={TOOLPATH} fill="#988000" />
        <g clipPath="url(#path-area)">
          <g stroke="#7f7cab">
            {arcs.map((i) => (
              <path
                key={i}
                d={`M${792 - i * 3} ${478 - i * 3}Q${806 - i * 8} ${508 - i * 2} ${788 - i * 4} ${540 + i}`}
                strokeDasharray={i > 12 ? '1 3' : '1 1'}
              />
            ))}
            {arcs.map((i) => (
              <path key={i} d={`M${688 + i * 4} ${446 - i}q-${20 - i / 2} 40 ${14 + i} ${80 - i}`} strokeDasharray="1 3" />
            ))}
            {arcs.map((i) => (
              <path key={i} d={`M${800 - i} ${484 + i}Q${812 - i} ${504 + i} ${790 - i * 3} ${536 + i}`} strokeDasharray="1 3" />
            ))}
            {arches.map((i) => (
              <path
                key={i}
                d={`M${800 - i * 4} ${534 + i * 4}Q828 ${500 + i * 6} ${862 + i * 5} ${534 + i * 3}`}
                strokeDasharray={i > 4 ? '1 3' : '1 1'}
              />
            ))}
            {slants.map((x, i) => (
              <path key={x} d={i < 16 ? `M${x} 502q4 20 ${40 - i} 46` : `M${x + 10} 508q-8 18 -${4 + i} 34`} strokeDasharray="1 1" />
            ))}
            {rim.map((i) => (
              <path key={i} d={`M${656 + i * 8} ${588 + i * 3}l${14 + i} -${4 + i / 2}`} strokeDasharray="1 4" />
            ))}
          </g>
          <path d="M738 408L788 474L833 498L828 502L800 492L770 474Z" fill="url(#mesh)" />
          <path d="M850 503L1034 518L1032 526L950 523L880 518Z" fill="url(#mesh)" />
          <g stroke="#7f7cab" strokeDasharray="1 3">
            <path d="M578 488Q596 530 625 557M584 500Q604 540 640 574M640 568Q700 606 760 616M650 576Q700 604 750 614M740 617q50 14 90 14" />
            <path d="M668 432q30 10 50-12M675 440q38 8 60-24M667 447q40 6 74-32M680 436q30 2 50-24M664 437q50 14 78-18" />
          </g>
        </g>

        {/* stock box */}
        <path d="M707 608.500H512.500v-216h431V513" stroke="#fff" />
        <path d="M707 608.500h236.500V513" stroke="#c4c4dc" strokeDasharray="6 3" />

        {/* offset toolpath and approach moves */}
        <path d="M743 379Q752 400 766 417Q780 438 802 466Q824 484 850 491Q890 503 940 511L1033 518M724 377L736 402" stroke="#988000" />
        <path d="M743 379.500L688 325" stroke="#f00000" strokeWidth="1.500" />
        <path d="M688 325L724 377" stroke="#f00000" strokeWidth="1.300" strokeDasharray="4 1" />

        {/* part contour */}
        <g stroke="#ffff00" strokeWidth="1.300">
          <path d="M518 461.500Q540 498 573 538Q594 560 617 579Q638 594 660 607Q702 627 753 641Q784 647 813 647Q855 647 897 641.500L990 627Q1034 621 1074 617.500" />
          <path d="M766 357Q767 371 770 382Q775 402 787 418Q802 437 820 447Q834 454 848 459Q873 466 905 471.500L943 477.500L990 484L1037 493L1082 502" />
          <path d="M848.500 459L814 647" />
        </g>
        <path d="M518 461L766 357M1081.500 502L1074.500 617" stroke="#00f000" strokeWidth="1.300" />
        <path d="M1024 557l54 2M641.500 409.500L653 434" stroke="#f000f0" strokeWidth="1.300" />
        <path d="M653 434L690 488Q718 518 745 530" stroke="#f000f0" strokeDasharray="1 6" />
        <path d="M745 530Q790 546 883 557" stroke="#f000f0" strokeDasharray="2 5" />

        {/* origin triad */}
        <path d="M727.500 447v46" stroke="#00d800" strokeWidth="2" strokeDasharray="2 1" />
        <path d="M735 500.500h46" stroke="#e00000" strokeWidth="2" strokeDasharray="3 1" />
        <g
          className="font-['DejaVu_Sans',sans-serif] text-[13px] font-bold"
          textAnchor="middle"
          stroke="#000"
          strokeWidth="2"
          paintOrder="stroke"
          shapeRendering="auto"
        >
          <text x="727" y="443" fill="#00b830">Y</text>
          <text x="727" y="505" fill="#1020e0">Z</text>
          <text x="789" y="505" fill="#d01020">X</text>
        </g>
      </svg>

      <div className="absolute right-[155px] bottom-[38px] flex h-7 w-[132px] items-center justify-around rounded-xs border border-[#b9b9c8] bg-[#fbfbfd] px-px text-[#1e88e5]">
        <button aria-label="Input method">
          <svg viewBox="0 0 16 16" className="size-4" fill="currentColor">
            <circle cx="2" cy="6.500" r="1.700" />
            <circle cx="5.500" cy="2.500" r="1.900" />
            <circle cx="10.500" cy="2.500" r="1.900" />
            <circle cx="14" cy="6.500" r="1.700" />
            <path d="M8 6q3 0 4 3 4 3 2 6-2 1-6 0-4 1-6 0-2-3 2-6 1-3 4-3z" />
          </svg>
        </button>
        <button className="text-base leading-none font-bold">中</button>
        <button aria-label="Emoji">
          <svg viewBox="0 0 16 16" className="size-4" fill="none" stroke="currentColor" strokeWidth="2">
            <circle cx="8" cy="8" r="7" />
            <path d="M5.500 5v2M10.500 5v2M4.500 9.500q3.500 4 7 0" />
          </svg>
        </button>
        <button aria-label="Handwriting">
          <svg viewBox="0 0 16 16" className="size-4" fill="currentColor">
            <path d="M1 14l2-6 7-6 4 4-7 7zM11 1l1-1 4 3-1 2z" />
            <path d="M7 14h2v1H7zM10 14h2v1h-2zM13 14h2v1h-2z" />
          </svg>
        </button>
        <button aria-label="Options">
          <svg viewBox="0 0 16 16" className="size-4" fill="none" stroke="currentColor">
            <circle cx="8" cy="8" r="5" strokeWidth="3" />
            <circle cx="8" cy="8" r="7" strokeWidth="2" strokeDasharray="3 2.500" />
          </svg>
        </button>
      </div>
    </main>
  );
}

const TASK_ART: Art = {
  uc: (
    <>
      <rect width="32" height="32" rx="4" fill="#ff7a14" />
      <path d="M3 8q4-7 9-3 4 4 2 10l4-3q-1-5 3-7l6 4q2 2-2 3l-4 1q6 2 5 8-1 8-10 8-11 0-13-7-1-6 6-7 1-5-2-6z" fill="#fff" />
      <circle cx="15" cy="22" r="5" fill="none" stroke="#ff7a14" strokeWidth="2" />
      <circle cx="15" cy="22" r="1.500" fill="#ff7a14" />
    </>
  ),
  masterx: (
    <>
      <path d="M2 2h8l20 27h-8z" fill="#eee" stroke="#333" />
      <path d="M24 1h6L10 30H1z" fill="#222" stroke="#777" />
      <path d="M11 3l6 0 6 12-5 0z" fill="#9fd0f5" />
      <path d="M21 18l5-8 3 2-6 8z" fill="#f2b521" stroke="#6a4a08" />
    </>
  ),
  folder: (
    <>
      <path d="M5 2l12-1v27L6 30z" fill="#f5e08c" stroke="#c9ab42" />
      <path d="M17 4l6 1v20l-7 4z" fill="#fbeeb4" stroke="#c9ab42" />
      <path d="M5 2l7 5v24l-7-3z" fill="#ead06c" />
      <path d="M20 20v8" stroke="#5fa8e0" strokeWidth="2" />
    </>
  ),
  nx: (
    <>
      <circle cx="15" cy="17" r="12" fill="#1f8fd8" />
      <path d="M8 12q6-5 10 0t7 8q-5 8-12 6-5-4-5-14z" fill="#4cc4e8" />
      <path d="M3 24q14 6 23-6 4-8-1-9M3 24l5-4M3 24l6 3" fill="none" stroke="#f49a1c" strokeWidth="3" />
      <path d="M3 2l14-2-3 15z" fill="#d81830" stroke="#8a0c1c" />
    </>
  ),
  solid: (
    <>
      <path d="M4 8l12-5 12 5v14l-12 6-12-6z" fill="#ddd" stroke="#000" />
      <path d="M10 11l4-3h10v11l-4 3H10z" fill="#1fd8d8" stroke="#000" strokeWidth="1.500" />
      <path d="M15 10h8v7l-3 2v-6h-5z" fill="#f5e800" stroke="#000" />
    </>
  ),
  prt: (
    <>
      <path d="M4 9l4-4h21v20l-4 4z" fill="#0a7f88" stroke="#000" />
      <path d="M4 9h21v20H4z" fill="#3fe8e8" stroke="#124" />
      <path d="M4 9l4-4h21l-4 4z" fill="#fff" stroke="#222" />
    </>
  ),
  paint: (
    <>
      <path d="M3 16Q5 5 17 4q10 2 8 9-3 2-1 5 4 5-3 8-8 5-14 1-6-4-4-11z" fill="#b9dcf5" stroke="#5a8fc0" />
      <circle cx="9" cy="13" r="2.500" fill="#28a048" />
      <circle cx="15" cy="9" r="2.500" fill="#f5b81c" />
      <circle cx="8" cy="20" r="2.500" fill="#e03030" />
      <circle cx="14" cy="23" r="2.500" fill="#3858d0" />
      <path d="M14 29l9-22 3 1-8 22z" fill="#e89434" stroke="#9a5a10" strokeWidth=".6" />
      <path d="M22 8l3-8 5 2-3 8z" fill="#f5d9a0" stroke="#9a5a10" strokeWidth=".6" />
    </>
  ),
};

function TaskButton({ art, label, active }: { art: React.ReactNode; label: string; active?: boolean }) {
  return (
    <button
      className={`ml-[3px] flex h-[38px] w-24 shrink-0 items-center gap-1 overflow-hidden rounded-[3px] border border-[#3d3029] pl-[5px] text-xs whitespace-nowrap text-white shadow-[inset_0_0_0_1px_#d0c2b8] ${
        active
          ? 'bg-linear-to-br from-[#e6dfda] from-30% to-[#a8968a]'
          : 'bg-linear-to-br from-[#c6bab1] via-[#a08c7f] via-40% to-[#9a8678]'
      }`}
    >
      {art}
      <span>{label}</span>
    </button>
  );
}

const taskIcon = (name: string) => (
  <svg viewBox="0 0 32 32" className="size-8 shrink-0">
    {TASK_ART[name]}
  </svg>
);

function TaskBar() {
  return (
    <footer className="relative flex h-10 shrink-0 items-center border-t-2 border-[#2e2622] bg-linear-to-r from-[#6d5c50] via-[#8d7769] via-10% to-[#a59082] text-white">
      <button aria-label="Start" className="w-[55px] shrink-0 pl-[6px]">
        <svg viewBox="0 0 38 38" className="size-[38px]">
          <circle cx="19" cy="19" r="18" fill="#1b4f80" stroke="#6d93ad" strokeWidth="1.500" />
          <path d="M2 18q17-9 34 0-4 18-17 18T2 18z" fill="#0f7fc0" />
          <path d="M8 28q11 9 22 0-4 8-11 8T8 28z" fill="#3fe0ff" />
          <path d="M3 16Q8 3 19 3t16 13q-16-6-32 0z" fill="#7aa2c4" opacity=".7" />
          <path d="M11 10q4-2 8 0l-2 8q-4-2-8 0z" fill="#f0622a" />
          <path d="M20 11q4 2 9 0l-2 8q-5 2-9 0z" fill="#8cc63c" />
          <path d="M9 20q4-2 8 0l-2 8q-4-2-8 0z" fill="#4a9fe8" />
          <path d="M18 20q4 2 9 0l-2 8q-4 2-9 0z" fill="#ffcf2c" />
        </svg>
      </button>
      <button aria-label="Cloud drive" className="flex w-14 shrink-0 justify-center">
        <svg viewBox="0 0 32 32" className="size-8" fill="none" stroke="#fff" strokeWidth="3">
          <rect width="32" height="32" rx="3" fill="#3fa3f5" stroke="none" />
          <circle cx="15" cy="11.500" r="5" />
          <circle cx="8.500" cy="20" r="4" />
          <path d="M12 17.500l6-1q6 0 5 6M12 22q4 3 8 2" />
          <path d="M26 23h3v3h-3z" fill="#fff" stroke="none" />
        </svg>
      </button>
      <button aria-label="Calculator" className="flex w-14 shrink-0 justify-center">
        <svg viewBox="0 0 24 30" className="h-[30px] w-6">
          <rect x=".5" y=".5" width="23" height="29" rx="2" fill="#a9cdea" stroke="#5f8fb8" />
          <path d="M3 3h18v9H3z" fill="#f4fafe" stroke="#6f9bc0" />
          <path d="M14.500 5h3v5h-3z" fill="none" stroke="#345" />
          <path d="M3 15h18v12H3z" fill="#3f7fb5" />
          <path d="M6 15v12M9 15v12M12 15v12M15 15v12M18 15v12M3 18h18M3 21h18M3 24h18" stroke="#dbeaf6" />
          <path d="M18 22h3v5h-3z" fill="#f5a623" />
        </svg>
      </button>
      <TaskButton art={taskIcon('uc')} label="【新提..." />
      <TaskButton art={taskIcon('masterx')} label="Maste..." />
      <button aria-label="SolidWorks" className="flex w-[54px] shrink-0 justify-center">
        <svg viewBox="0 0 32 30" className="h-[30px] w-8">
          <path d="M1 7l14-6 16 5v18l-15 6-15-5z" fill="#d01818" />
          <path d="M1 7l14-6 16 5-15 5z" fill="#f06a5a" />
          <path d="M16 11l15-5v18l-15 6z" fill="#a80e0e" />
          <path d="M12 14l-7-1v4l7 2v5l-8-2M18 14l2 10 3-7 3 5 3-12" fill="none" stroke="#fff" strokeWidth="2.500" />
        </svg>
      </button>
      <TaskButton art={taskIcon('folder')} label="nc" />
      <TaskButton art={taskIcon('nx')} label="NX 9 -..." />
      <TaskButton art={taskIcon('solid')} label="Solid ..." />
      <TaskButton art={taskIcon('prt')} label="PRT00..." />
      <TaskButton art={taskIcon('paint')} label="2.png ..." />
      <TaskButton art={<AppLogo className="h-[26px] w-8 shrink-0" />} label="hyper..." active />

      <div className="ml-auto flex h-full shrink-0 items-center">
        <span className="mr-[6px] font-['Liberation_Mono',monospace] text-xs">CH</span>
        <svg viewBox="0 0 134 24" className="mb-1 h-6 w-[134px]">
          <circle cx="8" cy="12" r="7" fill="#0a1ea8" stroke="#c8d0f0" />
          <path d="M5.500 10q0-3 2.500-3t2.500 2.500q0 1.500-2.500 3v1M8 15v2" fill="none" stroke="#fff" strokeWidth="1.800" />
          <path d="M29 5V3h5v4h-2M27 5h5v4h-5z" fill="none" stroke="#fff" />
          <path d="M45 8l5 12 6-12" fill="none" stroke="#222" strokeWidth="2.500" />
          <path d="M47 8l4 8 5-7" fill="none" stroke="#eee" />
          <path d="M69 7h6v6h-6z" fill="#ccc" stroke="#555" />
          <path d="M67 12h10v9H67z" fill="#777" />
          <circle cx="79" cy="17" r="5" fill="#2ab52a" />
          <path d="M96 17v3M99 15v5M102 13v7M105 11v9M108 8v12" stroke="#fff" strokeWidth="2" />
          <path d="M119 12h4l5-5v15l-5-5h-4z" fill="#fff" stroke="#555" strokeWidth=".6" />
          <path d="M130 10q3 4 0 9" fill="none" stroke="#fff" />
        </svg>
        <div className="mr-1 ml-2 w-[70px] pb-[2px] text-center text-xs leading-[17px]">
          <div>13:33</div>
          <div>2014/12/26</div>
        </div>
        <button
          aria-label="Show desktop"
          className="h-full w-[14px] border border-[#4a3d35] bg-linear-to-br from-[#c2b5ac] to-[#6d5b4f]"
        />
      </div>
      <span className="pointer-events-none absolute right-[19px] bottom-1 flex items-center font-['DejaVu_Sans','Noto_Sans_CJK_SC',sans-serif] text-[15px] leading-[18px] whitespace-nowrap text-white [-webkit-text-stroke:3px_#f01828] [paint-order:stroke_fill]">
        <span className="text-[17px]">三维网</span>
        <span className="font-bold">www.3dportal.cn</span>
      </span>
    </footer>
  );
}

export default function App() {
  return (
    <div className="flex h-screen min-h-[900px] flex-col overflow-hidden bg-[#d9b79a] font-['Noto_Sans','Noto_Sans_CJK_SC',sans-serif]">
      <div className="flex min-h-0 flex-1 flex-col">
        <TitleBar />
        <div className="flex min-h-0 flex-1">
          <div className="w-[9px] shrink-0 border-r border-l-2 border-r-[#5c5048] border-l-[#5c5048] bg-linear-to-b from-[#dcc0a8] via-[#f1e6de] via-28% to-[#dcb899] to-29%" />
          <div className="flex min-w-0 flex-1 flex-col border-t border-[#4a4448]">
            <MenuBar />
            <Toolbars />
            <div className="flex min-h-0 flex-1">
              <SideBar />
              <JobPanel />
              <Viewport />
            </div>
          </div>
          <div className="w-[9px] shrink-0 border-r-2 border-l-2 border-r-[#5c5048] border-l-[#f4f4f4] bg-linear-to-b from-[#bdb1b0] via-[#f1ddcc] via-28% to-[#d2b09a] to-29%" />
        </div>
      </div>
      <TaskBar />
    </div>
  );
}
